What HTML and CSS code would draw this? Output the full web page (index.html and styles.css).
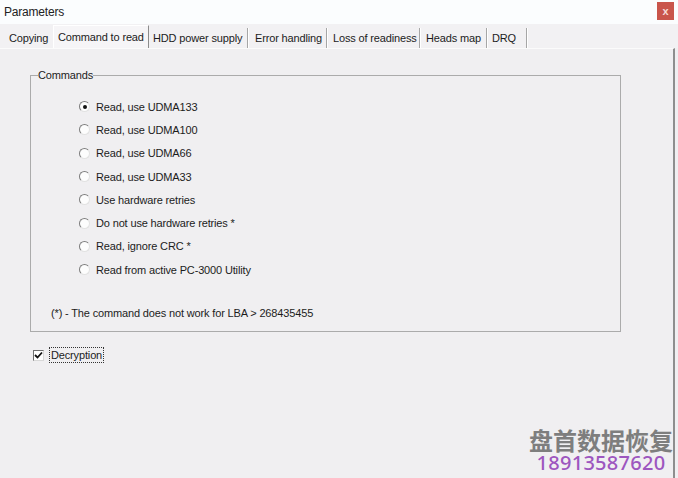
FILE: index.html
```html
<!DOCTYPE html>
<html>
<head>
<meta charset="utf-8">
<link rel="stylesheet" href="styles.css">
</head>
<body>
<div class="window">
  <div class="titlebar">
    <span class="title">Parameters</span>
    <span class="close">x</span>
  </div>
  <div class="tabs">
    <div class="tab t-copy">Copying</div>
    <div class="tab t-cmd selected">Command to read</div>
    <div class="tab t-hdd">HDD power supply</div>
    <div class="tab t-err">Error handling</div>
    <div class="tab t-loss">Loss of readiness</div>
    <div class="tab t-heads">Heads map</div>
    <div class="tab t-drq">DRQ</div>
  </div>
  <div class="panel">
    <fieldset class="group">
      <legend>Commands</legend>
      <div class="options">
        <div class="opt"><span class="radio checked"></span><span>Read, use UDMA133</span></div>
        <div class="opt"><span class="radio"></span><span>Read, use UDMA100</span></div>
        <div class="opt"><span class="radio"></span><span>Read, use UDMA66</span></div>
        <div class="opt"><span class="radio"></span><span>Read, use UDMA33</span></div>
        <div class="opt"><span class="radio"></span><span>Use hardware retries</span></div>
        <div class="opt"><span class="radio"></span><span>Do not use hardware retries *</span></div>
        <div class="opt"><span class="radio"></span><span>Read, ignore CRC *</span></div>
        <div class="opt"><span class="radio"></span><span>Read from active PC-3000 Utility</span></div>
      </div>
      <div class="note">(*) - The command does not work for LBA &gt; 268435455</div>
    </fieldset>
    <div class="check-row">
      <span class="checkbox"><svg width="9" height="9" viewBox="0 0 9 9"><path d="M1 4 L3.5 6.5 L8 1.5" fill="none" stroke="#111" stroke-width="1.8"/></svg></span>
      <span class="check-label">Decryption</span>
    </div>
    <div class="watermark">
      <div class="wm-cn">盘首数据恢复</div>
      <div class="wm-num">18913587620</div>
    </div>
  </div>
</div>
</body>
</html>
```
FILE: styles.css
```css
html, body {
  margin: 0;
  padding: 0;
}
body {
  width: 678px;
  height: 478px;
  overflow: hidden;
  background: #f0eff1;
  font-family: "Liberation Sans", Arial, sans-serif;
  font-size: 11px;
  letter-spacing: -0.15px;
  color: #1c1c1c;
}
.window {
  display: flex;
  flex-direction: column;
  height: 478px;
}
.titlebar {
  height: 24px;
  background: #fbfdfe;
  display: flex;
  align-items: center;
  justify-content: space-between;
  padding: 0 4px 0 4px;
}
.title {
  font-size: 12px;
  letter-spacing: -0.2px;
  color: #222;
  margin-top: -1px;
}
.close {
  width: 17px;
  height: 18px;
  background: #c9554b;
  color: #f6dcd8;
  font-size: 11px;
  font-weight: bold;
  letter-spacing: 0;
  display: flex;
  align-items: center;
  justify-content: center;
  margin-top: -2px;
}
.tabs {
  height: 24px;
  display: flex;
  align-items: flex-end;
  padding-left: 2px;
  background: #f2f1f3;
}
.tab {
  height: 20px;
  line-height: 21px;
  padding: 0 5px;
  box-sizing: border-box;
  white-space: nowrap;
  border-right: 1px solid #a6a6a6;
  box-shadow: 1px 0 0 #ffffff;
}
.t-copy { width: 51px; padding-left: 7px; border-right: none; box-shadow: none; }
.t-cmd { width: 96px; }
.t-hdd { width: 99px; padding-left: 4px; }
.t-err { width: 79px; padding-left: 7px; }
.t-loss { width: 93px; padding-left: 6px; }
.t-heads { width: 67px; padding-left: 6px; }
.t-drq { width: 40px; padding-left: 5px; }
.tab.selected {
  height: 23px;
  line-height: 22px;
  background: #f6f5f7;
  border-top: 1px solid #ffffff;
  border-left: 1px solid #ffffff;
  border-right: 1px solid #8c8c8c;
  box-shadow: none;
  padding-left: 4px;
}
.panel {
  position: relative;
  flex: 1;
  border-top: 1px solid #fbfbfb;
  border-right: 2px solid #8e8e8e;
  margin-right: 3px;
  padding: 19px 0 0 30px;
  display: flex;
  flex-direction: column;
}
.group {
  margin: 0;
  width: 591px;
  height: 264px;
  box-sizing: border-box;
  border: 1px solid #ababab;
  padding: 0 0 0 7px;
  display: flex;
  flex-direction: column;
}
.group legend {
  padding: 0;
  line-height: 14px;
  margin-bottom: 0;
}
.options {
  display: flex;
  flex-direction: column;
  padding: 13px 0 0 41px;
}
.opt {
  height: 23.3px;
  display: flex;
  align-items: center;
  gap: 6px;
}
.radio {
  width: 11px;
  height: 11px;
  box-sizing: border-box;
  border-radius: 50%;
  background: #fdfdfd;
  border: 1px solid;
  border-color: #7d7d7d #e2e2e2 #e2e2e2 #7d7d7d;
  display: flex;
  align-items: center;
  justify-content: center;
}
.radio.checked::after {
  content: "";
  width: 4px;
  height: 4px;
  border-radius: 50%;
  background: #111;
}
.note {
  margin-top: 26px;
  padding-left: 13px;
}
.check-row {
  display: flex;
  align-items: center;
  margin-top: 15px;
  margin-left: 3px;
  gap: 5px;
}
.checkbox {
  width: 11px;
  height: 11px;
  box-sizing: border-box;
  background: #ffffff;
  border: 1px solid;
  border-color: #6f6f6f #d8d8d8 #d8d8d8 #6f6f6f;
  display: flex;
  align-items: center;
  justify-content: center;
}
.check-label {
  border: 1px dotted #333;
  padding: 1px 1px;
  line-height: 12px;
}
.watermark {
  position: absolute;
  right: 0;
  bottom: 5px;
  display: flex;
  flex-direction: column;
  align-items: center;
  gap: 1px;
  letter-spacing: 0;
}
.wm-cn {
  font-family: "Noto Sans CJK SC", sans-serif;
  font-size: 24px;
  line-height: 23px;
  color: #7e7e7e;
  font-weight: bold;
  letter-spacing: 0;
}
.wm-num {
  font-family: "Noto Sans", sans-serif;
  font-size: 20px;
  line-height: 21px;
  color: #9d56bf;
  font-weight: 500;
  letter-spacing: 0.3px;
}
```
